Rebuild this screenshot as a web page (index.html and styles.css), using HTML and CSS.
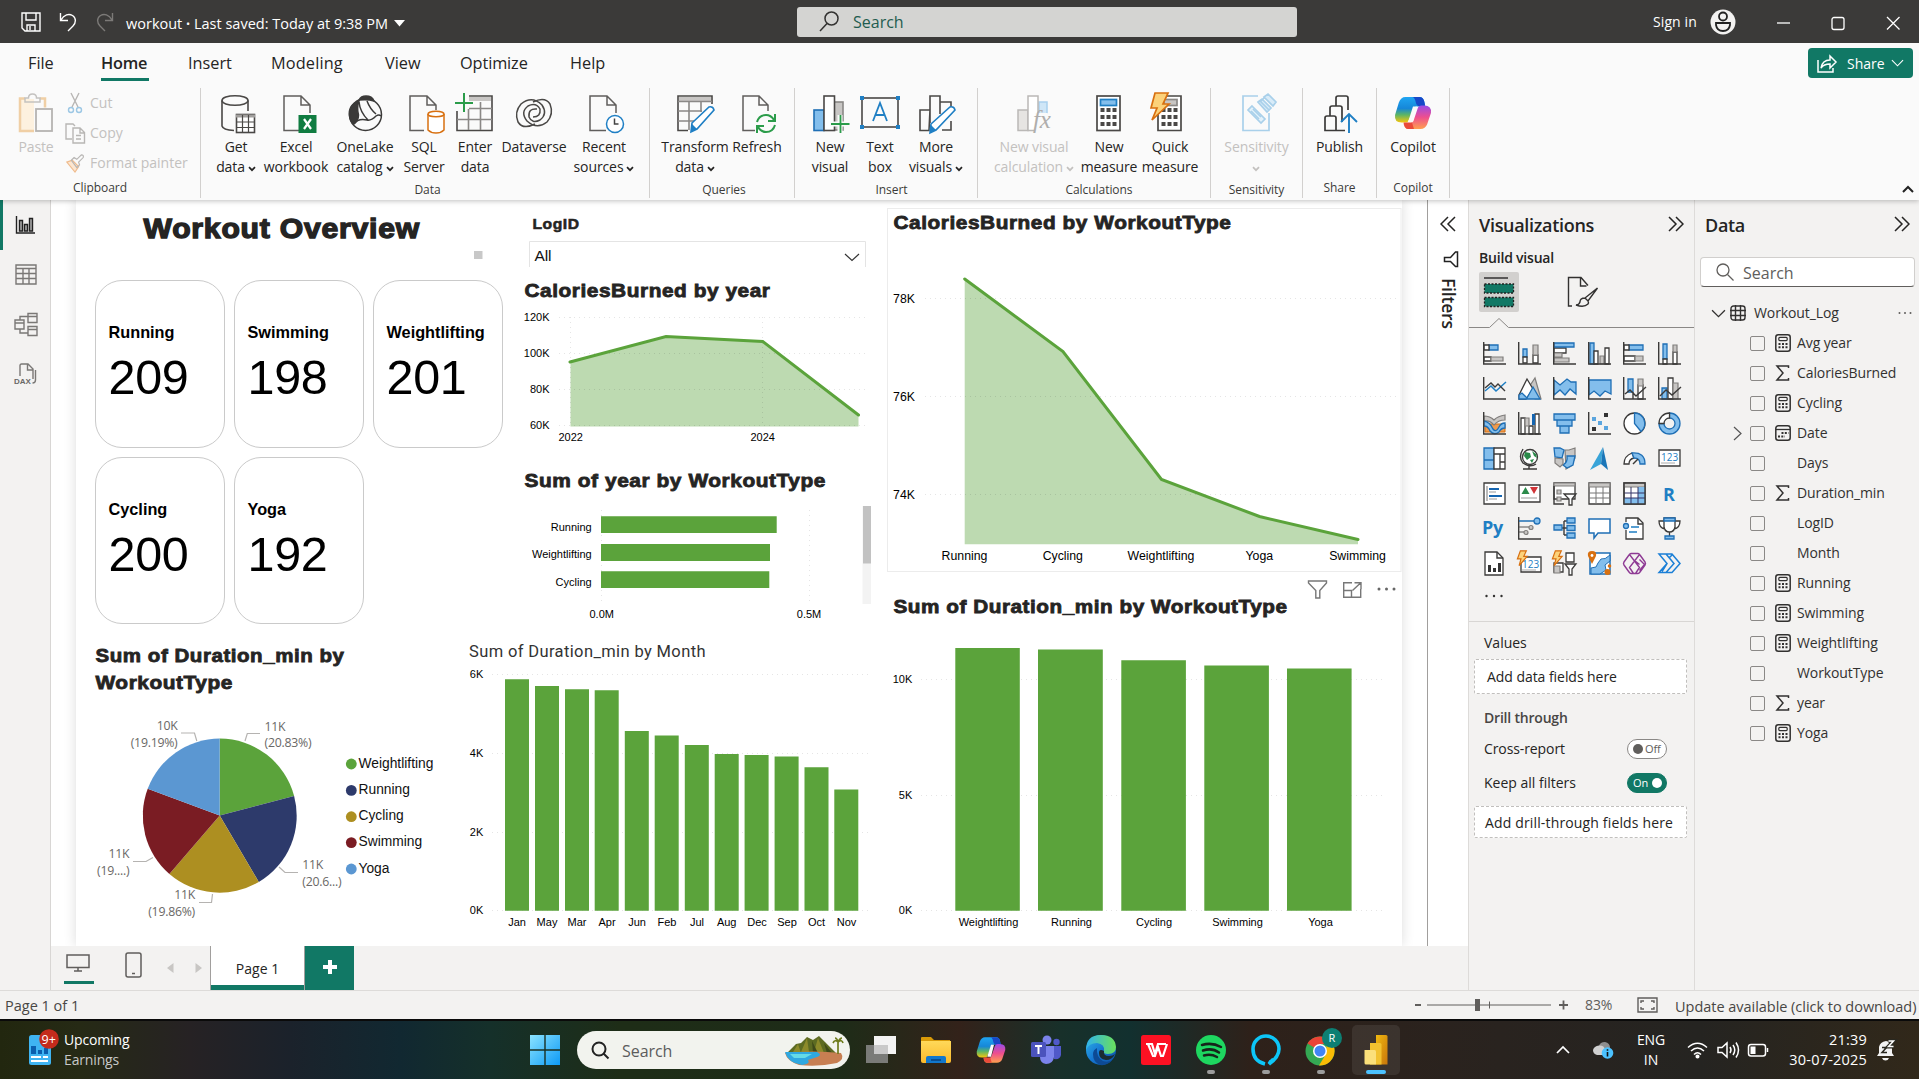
FILE: index.html
```html
<!DOCTYPE html>
<html lang="en">
<head>
<meta charset="utf-8">
<title>workout - Power BI Desktop</title>
<link rel="stylesheet" href="styles.css">
</head>
<body>
<svg class="defs" width="0" height="0" aria-hidden="true">
  <defs>
    <linearGradient id="cpA" x1="0" y1="0" x2="0" y2="1"><stop offset="0" stop-color="#1fa5f2"/><stop offset=".45" stop-color="#1687d8"/><stop offset=".7" stop-color="#5cb566"/><stop offset="1" stop-color="#f6c60c"/></linearGradient>
    <linearGradient id="cpB" x1="0" y1="0" x2="0" y2="1"><stop offset="0" stop-color="#9a4be8"/><stop offset=".5" stop-color="#ee4f8e"/><stop offset="1" stop-color="#ffa04f"/></linearGradient>
    <linearGradient id="edgeG" x1="0" y1="0" x2="1" y2="1"><stop offset="0" stop-color="#2fb6e8"/><stop offset=".5" stop-color="#1677d2"/><stop offset="1" stop-color="#0c4fa0"/></linearGradient>
    <linearGradient id="edgeT" x1="0" y1="0" x2="1" y2="0"><stop offset="0" stop-color="#2fb2ee"/><stop offset="1" stop-color="#6be05a"/></linearGradient>
    <linearGradient id="winG" x1="0" y1="0" x2="1" y2="1"><stop offset="0" stop-color="#8be3ff"/><stop offset="1" stop-color="#0d9af5"/></linearGradient>
    <linearGradient id="pbG" x1="0" y1="0" x2="1" y2="1"><stop offset="0" stop-color="#f0b90f"/><stop offset="1" stop-color="#c8760c"/></linearGradient>
    <linearGradient id="folderG" x1="0" y1="0" x2="0" y2="1"><stop offset="0" stop-color="#ffd95a"/><stop offset="1" stop-color="#fbb92b"/></linearGradient>
    <symbol id="down" viewBox="0 0 8 6"><path d="M1 1.2l3 3 3-3" fill="none" stroke="currentColor" stroke-width="1.7"/></symbol>
    <symbol id="chev" viewBox="0 0 14 8"><path d="M1 1l6 6 6-6" fill="none" stroke="currentColor" stroke-width="1.2"/></symbol>
    <symbol id="dbl" viewBox="0 0 16 16"><path d="M1 1l7 7-7 7M8 1l7 7-7 7" fill="none" stroke="currentColor" stroke-width="1.5"/></symbol>
    <symbol id="copilot" viewBox="0 0 40 36">
      <path d="M12 1h15q4 0 5 5l1 5H23L14 28q-1 0-6 0-8 0-7-8L5 7q2-6 7-6z" fill="url(#cpA)"/>
      <path d="M19 1h8q4 0 5 5l1 5h-6q-3 0-4-4-1-6-4-6z" fill="#1848c8"/>
      <path d="M28 35H15q-4 0-5-6h6q4 0 5-4l4-12q1-3 4-3h3q8 0 7 8l-4 12q-2 5-7 5z" fill="url(#cpB)"/>
      <path d="M10 28h9l2 7h-6q-4 0-5-7z" fill="#ea4a3a"/>
      <path d="M20 11h4l-4 16h-5z" class="cp-gap"/>
    </symbol>
    <symbol id="calc" viewBox="0 0 16 18"><rect x=".8" y=".8" width="14.4" height="16.4" rx="2.5" fill="none" stroke="#323130" stroke-width="1.5"/><rect x="3.8" y="3.4" width="8.4" height="3.2" rx="1" fill="none" stroke="#323130" stroke-width="1.2"/><path d="M3.5 10h9M3.5 13.2h9" stroke="#323130" stroke-width="2" stroke-dasharray="2 1.5"/></symbol>
    <symbol id="sigma" viewBox="0 0 16 18"><path d="M13.500 4V2H2l6 7-6 7h11.500v-2" fill="none" stroke="#323130" stroke-width="1.5"/></symbol>
    <symbol id="cal" viewBox="0 0 16 18"><rect x=".8" y="1.8" width="14.4" height="14.4" rx="2.5" fill="none" stroke="#323130" stroke-width="1.5"/><path d="M1 5.5h14" stroke="#323130" stroke-width="1.3"/><path d="M6.500 9h7M3 12.400h7" stroke="#323130" stroke-width="2" stroke-dasharray="2 1.3"/></symbol>
    <symbol id="bolt" viewBox="0 0 14 20"><path d="M4.500 1h7L8.500 7.500h4L3 18.500l2.200-8H1z" fill="#fcd27a" stroke="#d87010" stroke-width="1.4"/></symbol>
  </defs>
</svg>

<header class="titlebar">
  <svg class="ico-save" width="20" height="20" viewBox="0 0 20 20" fill="none" stroke="#fff" stroke-width="1.4"><path d="M1 1h18v18H4l-3-3zM5 1v7h10V1M6 19v-6h8v6M9 14v4"/></svg>
  <svg class="ico-undo" width="18" height="20" viewBox="0 0 18 20" fill="none" stroke="#fff" stroke-width="1.4"><path d="M1.500 1v7.500H9M2 8C5 2.500 10 1.500 13.500 3.500c4 2.500 3.500 7.500.5 10.500l-5 5"/></svg>
  <svg class="ico-redo" width="18" height="20" viewBox="0 0 18 20" fill="none" stroke="#7c7a78" stroke-width="1.4"><path d="M16.500 1v7.500H9M16 8C13 2.500 8 1.500 4.500 3.500c-4 2.500-3.500 7.500-.5 10.500l5 5"/></svg>
  <span class="doc">workout <small>•</small> Last saved: Today at 9:38 PM</span>
  <svg width="11" height="7" viewBox="0 0 11 7"><path d="M0 0h11L5.500 6.500z" fill="#fff"/></svg>
  <div class="top-search">
    <svg width="20" height="21" viewBox="0 0 20 21" fill="none" stroke="#323130" stroke-width="1.5"><circle cx="12.500" cy="7.500" r="6.500"/><path d="M8 12.500L1 20"/></svg>
    <span>Search</span>
  </div>
  <span class="signin">Sign in</span>
  <svg class="avatar" width="26" height="26" viewBox="0 0 26 26"><circle cx="13" cy="13" r="12.500" fill="#f3f2f1"/><circle cx="13" cy="7.500" r="4" fill="none" stroke="#222" stroke-width="1.8"/><path d="M6 14h14v2q-1 6-7 6t-7-6z" fill="none" stroke="#222" stroke-width="1.8"/></svg>
  <svg class="win" width="126" height="16" viewBox="0 0 126 16" fill="none" stroke="#fff" stroke-width="1.3"><path d="M1 8h13"/><rect x="56" y="2.500" width="12" height="12" rx="2"/><path d="M111 2l12.500 12.500M123.500 2L111 14.500"/></svg>
</header>

<nav class="tabs">
  <span class="tab t-file">File</span><span class="tab t-home active">Home</span><span class="tab t-insert">Insert</span><span class="tab t-model">Modeling</span><span class="tab t-view">View</span><span class="tab t-opt">Optimize</span><span class="tab t-help">Help</span>
  <button class="share"><svg width="20" height="19" viewBox="0 0 20 19" fill="none" stroke="#fff" stroke-width="1.500"><path d="M1 6v12h15v-4M4 14c1-6 4-8 9-8V2l6 6-6 6v-4c-4 0-7 1-9 4z"/></svg><span>Share</span><svg class="sh-chev" width="13" height="8"><use href="#chev"/></svg></button>
</nav>

<section class="ribbon">
  <div class="group g-clip">
    <div class="btns">
      <div class="btn w-paste off"><svg width="40" height="40" viewBox="0 0 40 40" fill="none"><path d="M9 6H4v31h14V6" fill="#fdf1df"/><path d="M9 5.500H4V38h14M24 5.500h5v9" stroke="#f0cfa5" stroke-width="2.500"/><path d="M9 9V5h3.500q0-4 4-4t4 4H24v4z" stroke="#c4c2c0" stroke-width="1.500"/><rect x="20" y="16" width="16" height="22" fill="#fafafa" stroke="#b5b3b1" stroke-width="1.800"/></svg><span>Paste</span></div>
      <div class="small off">
        <div class="s-row"><svg width="20" height="22" viewBox="0 0 20 22" fill="none" stroke-width="1.400"><path d="M6 1l7 14M14 1L7 15" stroke="#b8b6b4"/><circle cx="6" cy="18" r="2.500" stroke="#9cc7e4"/><circle cx="14" cy="18" r="2.500" stroke="#9cc7e4"/></svg><span>Cut</span></div>
        <div class="s-row"><svg width="20" height="22" viewBox="0 0 20 22" fill="none" stroke="#b8b6b4" stroke-width="1.400"><path d="M7 17H1V2h7l2 2"/><path d="M8 6h7l4.500 4.500V21H8zM15 6v5h4.500M11 13.500h5M11 17h5"/></svg><span>Copy</span></div>
        <div class="s-row"><svg width="22" height="22" viewBox="0 0 22 22" fill="none" stroke-width="1.300"><path d="M2 10l6-2 7 7-4 6z" fill="#fde6cf" stroke="#efbb8d"/><path d="M7 8l3-3 3 2 5-5q3 0 2 3l-5 5 1 3-3 3z" stroke="#b8b6b4"/></svg><span>Format painter</span></div>
      </div>
    </div>
    <div class="cap">Clipboard</div>
  </div>

  <div class="group g-data">
    <div class="btns">
      <div class="btn w60"><svg width="40" height="40" viewBox="0 0 40 40" fill="none" stroke="#4a4846" stroke-width="1.600"><ellipse cx="19" cy="7.500" rx="13" ry="4.800"/><path d="M6 7.500V33q1 4 12 4.500M32 7.500V18"/><rect x="20.500" y="21.500" width="18" height="18" fill="#fff"/><path d="M20 23h19" stroke="#a19f9d" stroke-width="3"/><path d="M20 29h19M20 34.500h19M26.500 22v17M32.500 22v17" stroke-width="1.200"/></svg><span>Get<br>data<svg class="dn" width="8" height="6"><use href="#down"/></svg></span></div>
      <div class="btn w60"><svg width="40" height="40" viewBox="0 0 40 40" fill="none" stroke="#605e5c" stroke-width="1.500"><path d="M23 37.500H8V3h17l9 9v8M25 3v9h9"/><rect x="22.500" y="22" width="18" height="18" fill="#107c41" stroke="none"/><path d="M28 26l7 10M35 26l-7 10" stroke="#fff" stroke-width="2.200"/></svg><span>Excel<br>workbook</span></div>
      <div class="btn w78"><svg width="40" height="40" viewBox="0 0 40 40" fill="none" stroke="#3b3a39" stroke-width="1.500"><circle cx="20.500" cy="21.500" r="16"/><path d="M14 8Q3 12 4.500 23q1 6 4 8 5-3 5-9-2-7 .5-14z" fill="#3b3a39"/><path d="M14 7q2-4 7-4 6 0 8 5-6-2-15-1z" fill="#3b3a39"/><path d="M14 9q1 10 9 18M22 8q3 8 9 13M9 31q4-6 13-4 4 1 9-4 3-2 5 0"/></svg><span>OneLake<br>catalog<svg class="dn" width="8" height="6"><use href="#down"/></svg></span></div>
      <div class="btn w40"><svg width="40" height="40" viewBox="0 0 40 40" fill="none" stroke="#605e5c" stroke-width="1.500"><path d="M20 37.500H6V3h17l9 9v5M23 3v9h9"/><g stroke="#d87010"><path d="M24 21v16q3 3 8 3t8-3V21" fill="#fff"/><ellipse cx="32" cy="21" rx="8" ry="2.800" fill="#fff"/></g></svg><span>SQL<br>Server</span></div>
      <div class="btn w62"><svg width="40" height="40" viewBox="0 0 40 40" fill="none" stroke="#4a4846" stroke-width="1.600"><path d="M14 3h23v34.500H2V18"/><path d="M14 6h22" stroke="#c8c6c4" stroke-width="4"/><path d="M14 15.500h23M2 26.500h35M13.500 16v21M25.500 9v28" stroke="#8a8886"/><path d="M0 10h18M9 0v19" stroke="#2b9c4a" stroke-width="2"/></svg><span>Enter<br>data</span></div>
      <div class="btn w56"><svg width="40" height="40" viewBox="0 0 40 40" fill="none" stroke="#4a4846" stroke-width="1.500"><path d="M21 31Q9 37 4 29 0 19 7 11q11-9 21 1 6 9-2 15-8 4-11-3-1-9 8-8"/><path d="M19 9Q31 3 36 11q4 10-3 18-10 8-20-1-7-9 1-15 8-4 12 3 1 8-7 8"/></svg><span>Dataverse</span></div>
      <div class="btn w84"><svg width="40" height="40" viewBox="0 0 40 40" fill="none" stroke="#605e5c" stroke-width="1.500"><path d="M22 37.500H6V3h17l9 9v8M23 3v9h9"/><circle cx="31" cy="31" r="8.500" fill="#fff" stroke="#1f7fc4"/><path d="M30.500 25.500V31h4" stroke="#444"/></svg><span>Recent<br>sources<svg class="dn" width="8" height="6"><use href="#down"/></svg></span></div>
    </div>
    <div class="cap">Data</div>
  </div>

  <div class="group g-query">
    <div class="btns">
      <div class="btn w82"><svg width="40" height="40" viewBox="0 0 40 40" fill="none" stroke="#4a4846" stroke-width="1.600"><path d="M13 37.500H3V3h34v8"/><path d="M4 6h32" stroke="#c8c6c4" stroke-width="4"/><path d="M3 8.500h34M3 18h24M3 28h16M14 9v28M26 9v10" stroke="#8a8886"/><path d="M17 30L34 14q4-1 5 3L22 36l-6 3z" fill="#fff" stroke="#1f7fc4"/><path d="M17 31l5 5-6 3z" fill="#1f7fc4" stroke="none"/></svg><span>Transform<br>data<svg class="dn" width="8" height="6"><use href="#down"/></svg></span></div>
      <div class="btn w42"><svg width="40" height="40" viewBox="0 0 40 40" fill="none" stroke="#605e5c" stroke-width="1.500"><path d="M18 37.500H6V3h16l9 9v6M22 3v9h9"/><g stroke="#2b9c4a" stroke-width="2"><path d="M20 29q2-7 9-7 5 0 8 5M38 21v7h-7M38 32q-2 7-9 7-5 0-8-5M20 40v-7h7"/></g></svg><span>Refresh</span></div>
    </div>
    <div class="cap">Queries</div>
  </div>

  <div class="group g-ins">
    <div class="btns">
      <div class="btn w48"><svg width="40" height="40" viewBox="0 0 40 40" fill="none" stroke="#4a4846" stroke-width="1.600"><rect x="24" y="9" width="9" height="28" fill="#c8c6c4" stroke="#8a8886"/><rect x="4" y="17" width="10" height="20.500" fill="#83beec" stroke="#1f6fb5"/><rect x="14" y="3" width="10.500" height="34.500" fill="#fff"/><path d="M30 22v18M20 31h19" stroke="#fafafa" stroke-width="5"/><path d="M30.500 22v18M21 31h18.500" stroke="#2b9c4a" stroke-width="1.800"/></svg><span>New<br>visual</span></div>
      <div class="btn w52"><svg width="40" height="40" viewBox="0 0 40 40" fill="none" stroke="#4a4846" stroke-width="1.600"><rect x="2" y="5" width="36" height="29"/><g fill="#1f7fc4" stroke="none"><path d="M0 3h4v4H0zM36 3h4v4h-4zM0 32h4v4H0zM36 32h4v4h-4z"/></g><path d="M13 28l7-18 7 18M15.500 22h9" stroke="#1f7fc4" stroke-width="1.800"/></svg><span>Text<br>box</span></div>
      <div class="btn w60"><svg width="40" height="40" viewBox="0 0 40 40" fill="none" stroke="#4a4846" stroke-width="1.600"><path d="M13 37.500H4V17h10zM14 30V3h10v18M24 9h11v5M35 28v9h-9"/><path d="M15 31L34 14q4-1 5 3L20 37l-6 3z" fill="#fff" stroke="#1f7fc4"/><path d="M15 32l5 5-6 3z" fill="#1f7fc4" stroke="none"/></svg><span>More<br>visuals<svg class="dn" width="8" height="6"><use href="#down"/></svg></span></div>
    </div>
    <div class="cap">Insert</div>
  </div>

  <div class="group g-calc">
    <div class="btns">
      <div class="btn w92 off"><svg width="40" height="40" viewBox="0 0 40 40" fill="none" stroke="#bab8b6" stroke-width="1.500"><rect x="25" y="9" width="8" height="16" fill="#cfe6f7" stroke="#a9d0ee"/><rect x="4" y="17" width="10" height="20.500" fill="#e6e4e2"/><rect x="14" y="3" width="10" height="34.500" fill="#fff"/><path d="M33 20h-12v20h18V22z" fill="#fafafa" stroke="none"/><text x="19" y="35" class="fx">fx</text></svg><span>New visual<br>calculation<svg class="dn" width="8" height="6"><use href="#down"/></svg></span></div>
      <div class="btn w58"><svg width="40" height="40" viewBox="0 0 40 40" fill="none" stroke="#4a4846" stroke-width="1.700"><rect x="8" y="3" width="23" height="34.500" fill="#fff"/><rect x="11.500" y="6.500" width="16" height="6" fill="#83beec" stroke="#1f7fc4"/><path d="M11.500 17h16M11.500 24h16M11.500 31h16" stroke-width="4" stroke-dasharray="4 2"/></svg><span>New<br>measure</span></div>
      <div class="btn w64"><svg width="40" height="40" viewBox="0 0 40 40" fill="none" stroke="#4a4846" stroke-width="1.700"><path d="M8 3h23v34.500H8z" fill="#fff"/><rect x="14" y="6.500" width="13" height="6" fill="#c8c6c4" stroke="#8a8886"/><path d="M11.500 17h16M11.500 24h16M11.500 31h16" stroke-width="4" stroke-dasharray="4 2"/><path d="M5 0h13l-5 11h6L2 27l5-12H1z" fill="#fcd27a" stroke="#d87010"/></svg><span>Quick<br>measure</span></div>
    </div>
    <div class="cap">Calculations</div>
  </div>

  <div class="group g-sens">
    <div class="btns"><div class="btn off"><svg width="40" height="40" viewBox="0 0 40 40" fill="none" stroke="#a9d0ea" stroke-width="1.700"><path d="M22 3H7v34.500h26V20"/><path d="M16 13l13 13-4 4-13-13z" fill="#e3f1fa"/><path d="M17 16l8 8M15 18l8 8"/><path d="M24 8l9 9M22 9l4-3 9 9-4 4zM28 4l4-3 8 8-3 4zM28 5l-3 3" fill="#d8ebf8"/></svg><span>Sensitivity<br><svg class="dn alone" width="8" height="6"><use href="#down"/></svg></span></div></div>
    <div class="cap">Sensitivity</div>
  </div>
  <div class="group g-share">
    <div class="btns"><div class="btn"><svg width="40" height="40" viewBox="0 0 40 40" fill="none" stroke="#3b3a39" stroke-width="1.700"><path d="M26 37.500H6V25q0-2 2-2h7q2 0 2 2v12M11 23V15q0-2 2-2h8q2 0 2 2v14M17 13V5q0-2 2-2h8q2 0 2 2v12"/><path d="M30 40V21M22 29l8-8 8 8" stroke="#1f7fc4" stroke-width="1.900"/></svg><span>Publish</span></div></div>
    <div class="cap">Share</div>
  </div>
  <div class="group g-cop">
    <div class="btns"><div class="btn"><svg class="cp" width="40" height="40" viewBox="0 0 40 40"><use href="#copilot" x="1" y="3" width="38" height="34"/></svg><span>Copilot</span></div></div>
    <div class="cap">Copilot</div>
  </div>
  <svg class="collapse" width="12" height="8" viewBox="0 0 12 8"><path d="M1 7l5-5 5 5" fill="none" stroke="#222" stroke-width="2"/></svg>
</section>

<main class="work">
  <aside class="rail">
    <div class="rail-item on"><svg width="20" height="20" viewBox="0 0 20 20" fill="none" stroke="#222" stroke-width="1.400"><path d="M1.500 1v17H20"/><path d="M4.500 5.500h3V16h-3zM9.500 9.500h3V16h-3zM14.500 3.500h3V16h-3z" fill="#aaa"/></svg></div>
    <div class="rail-item"><svg width="22" height="21" viewBox="0 0 22 21" fill="none" stroke="#7a7876" stroke-width="1.400"><path d="M1 1h20v19H1zM1 4.500h20M1 9.500h20M1 14.500h20M8 5v15M14 5v15"/></svg></div>
    <div class="rail-item"><svg width="24" height="25" viewBox="0 0 24 25" fill="none" stroke="#7a7876" stroke-width="1.400"><path d="M1 8h9v9H1zM1 11h9M14 1.500h9v9h-9zM14 4.500h9M14 14.500h9v9h-9zM14 17.500h9M6 8V4.500h8M6 17v4h8"/></svg></div>
    <div class="rail-item"><svg width="24" height="22" viewBox="0 0 24 22" fill="none" stroke="#7a7876" stroke-width="1.400"><path d="M6 13V2.500Q6 1 7.500 1H14l5 5v10M13.500 1v6H19M21.500 7v10q0 3-3 3"/><text x="0" y="21" class="dax">DAX</text></svg></div>
  </aside>

  <div class="center">
    <div class="stage">
      <div class="page">
        <div class="left-area">
          <div class="row-top">
            <div class="cards-col">
              <svg class="heading" width="434" height="78" viewBox="76 200 434 78"><text class="ttl big" x="143.500" y="237.500" textLength="276.500" lengthAdjust="spacingAndGlyphs">Workout Overview</text><path d="M474 251h8.500v8H474z" fill="#c8c8c8"/></svg>
              <div class="cards">
                <div class="card"><b>Running</b><span>209</span></div>
                <div class="card"><b>Swimming</b><span>198</span></div>
                <div class="card"><b>Weightlifting</b><span>201</span></div>
                <div class="card"><b>Cycling</b><span>200</span></div>
                <div class="card"><b>Yoga</b><span>192</span></div>
              </div>
            </div>
            <svg width="370" height="430" viewBox="510 200 370 430">
              <text class="ttl sm" x="532.500" y="229" textLength="47" lengthAdjust="spacingAndGlyphs">LogID</text>
              <path d="M529.500 267v-25.500h336V267" fill="none" stroke="#e4e4e4"/>
              <text class="ar" font-size="15.500" x="534.500" y="261" textLength="17">All</text>
              <path d="M845 254l7 6.500 7-6.500" fill="none" stroke="#333" stroke-width="1.200"/>
              <text class="ttl" x="524.500" y="296.500" textLength="246" lengthAdjust="spacingAndGlyphs">CaloriesBurned by year</text>
              <path d="M570.500 362L666 336.500l96.700 5L858.500 415v11.500h-288z" fill="#bddab1"/>
              <g class="grid"><path d="M559 317.500h307M559 353.500h307M559 389.500h307M559 425.500h307M570.500 317v109M762.500 317v109"/></g>
              <path d="M570 362L666 336.500l96.700 5L858.500 415" class="line"/>
              <g class="ax e"><text x="549.500" y="321">120K</text><text x="549.500" y="357">100K</text><text x="549.500" y="393">80K</text><text x="549.500" y="429">60K</text></g>
              <g class="ax m"><text x="570.700" y="441">2022</text><text x="762.700" y="441">2024</text></g>
              <text class="ttl" x="524.500" y="486.500" textLength="301.500" lengthAdjust="spacingAndGlyphs">Sum of year by WorkoutType</text>
              <g class="grid"><path d="M601.500 510v92M809.500 510v92"/></g>
              <g class="bar"><path d="M601 516.300h175.700V533H601zM601 544h169v17H601zM601 571.300h168.300V588H601z"/></g>
              <g class="ax e"><text x="591.700" y="530.800">Running</text><text x="591.700" y="558">Weightlifting</text><text x="591.700" y="586">Cycling</text></g>
              <g class="ax m"><text x="601.700" y="618.300">0.0M</text><text x="809" y="618.300">0.5M</text></g>
              <path d="M862.500 506h8.500v98h-8.500z" fill="#f3f3f3"/><path d="M863 506h8v57.500h-8z" fill="#c2c2c2"/>
            </svg>
          </div>
          <div class="row-bot">
            <svg width="384" height="315" viewBox="76 630 384 315">
              <text class="ttl" x="95.500" y="662" textLength="249" lengthAdjust="spacingAndGlyphs">Sum of Duration_min by</text>
              <text class="ttl" x="95.500" y="688.700" textLength="137.500" lengthAdjust="spacingAndGlyphs">WorkoutType</text>
              <path d="M219.700 815.600V738.600A77 77 0 0 1 294.100 795.900z" fill="#5ba33b"/>
              <path d="M219.700 815.600L294.100 795.900A77 77 0 0 1 258.800 882z" fill="#2d3a6b"/>
              <path d="M219.700 815.600L258.800 882A77 77 0 0 1 169.400 874z" fill="#ad8f21"/>
              <path d="M219.700 815.600L169.400 874A77 77 0 0 1 147.700 788.700z" fill="#7a1c23"/>
              <path d="M219.700 815.600L147.700 788.700A77 77 0 0 1 219.700 738.600z" fill="#5b97d2"/>
              <path class="lead" d="M181 733h13.500l2.300 8M245 741l2.300-7.500H260M133 861.500h13l7-4M279 867l6 5.500h13M212.500 894l-1 8.500H199"/>
              <g class="pl e"><text x="177.500" y="730">10K</text><text x="177.500" y="747">(19.19%)</text><text x="129.300" y="858">11K</text><text x="129.300" y="875">(19....)</text><text x="195" y="899">11K</text><text x="195" y="916">(19.86%)</text></g>
              <g class="pl"><text x="264.500" y="731">11K</text><text x="264.500" y="747.300">(20.83%)</text><text x="302.300" y="869">11K</text><text x="302.300" y="886">(20.6...)</text></g>
              <circle cx="351.300" cy="764" r="5.400" fill="#5ba33b"/><circle cx="351.300" cy="790.400" r="5.400" fill="#2d3a6b"/><circle cx="351.300" cy="816.700" r="5.400" fill="#ad8f21"/><circle cx="351.300" cy="842.600" r="5.400" fill="#7a1c23"/><circle cx="351.300" cy="869" r="5.400" fill="#5b97d2"/>
              <g class="ar" font-size="13.800"><text x="358.500" y="768">Weightlifting</text><text x="358.500" y="794">Running</text><text x="358.500" y="820">Cycling</text><text x="358.500" y="846.300">Swimming</text><text x="358.500" y="873.300">Yoga</text></g>
            </svg>
            <svg width="420" height="315" viewBox="460 630 420 315">
              <text class="din" x="469" y="657" textLength="236.500">Sum of Duration_min by Month</text>
              <g class="grid"><path d="M492 674.500h376M492 753.500h376M492 832.500h376M492 910.500h376"/></g>
              <g class="bar"><path d="M505 679.300h24V910.700h-24zM535 686h24V910.700h-24zM565 689.300h24V910.700h-24zM594.700 690.300h24V910.700h-24zM624.800 731h24V910.700h-24zM654.700 735.600h24V910.700h-24zM684.800 745h24V910.700h-24zM714.700 754h24V910.700h-24zM744.600 755h24V910.700h-24zM774.600 756.600h24V910.700h-24zM804.500 767.300h24V910.700h-24zM834.300 789.500h24V910.700h-24z"/></g>
              <g class="ax e"><text x="483.300" y="678">6K</text><text x="483.300" y="757">4K</text><text x="483.300" y="836">2K</text><text x="483.300" y="914">0K</text></g>
              <g class="ax m"><text x="517" y="926">Jan</text><text x="547" y="926">May</text><text x="577" y="926">Mar</text><text x="607" y="926">Apr</text><text x="637" y="926">Jun</text><text x="667" y="926">Feb</text><text x="697" y="926">Jul</text><text x="726.700" y="926">Aug</text><text x="757" y="926">Dec</text><text x="787" y="926">Sep</text><text x="816.500" y="926">Oct</text><text x="846.500" y="926">Nov</text></g>
            </svg>
          </div>
        </div>
        <svg width="522" height="745" viewBox="880 200 522 745">
          <rect x="887.500" y="208.500" width="513.500" height="363" fill="none" stroke="#ececec"/>
          <text class="ttl" x="893.500" y="228.700" textLength="338" lengthAdjust="spacingAndGlyphs">CaloriesBurned by WorkoutType</text>
          <path d="M964.700 279L1063 351.500l98.500 128 98 37 98.500 23v4.800H964.700z" fill="#bddab1"/>
          <g class="grid"><path d="M925 298.500h473M925 396.500h473M925 494.500h473"/></g>
          <path d="M964.700 279L1063 351.500l98.500 128 98 37 98.500 23" class="line"/>
          <g class="ax2 e"><text x="915" y="303">78K</text><text x="915" y="401">76K</text><text x="915" y="499">74K</text></g>
          <g class="ax2 m"><text x="964.500" y="560">Running</text><text x="1062.800" y="560">Cycling</text><text x="1161" y="560">Weightlifting</text><text x="1259.300" y="560">Yoga</text><text x="1357.500" y="560">Swimming</text></g>
          <g fill="none" stroke="#777" stroke-width="1.400"><path d="M1308.500 581h18v2l-6.700 7.500V598h-4v-7.500l-7.300-7.500zM1352 582.700h-8.300v14.600h17V589M1344 590.500h7.500v7M1354.500 582.700h6.500v6.500M1360.500 583l-8 7.500"/></g>
          <g fill="#666"><circle cx="1379" cy="589" r="1.500"/><circle cx="1386.500" cy="589" r="1.500"/><circle cx="1394" cy="589" r="1.500"/></g>
          <text class="ttl" x="893.500" y="612.500" textLength="394" lengthAdjust="spacingAndGlyphs">Sum of Duration_min by WorkoutType</text>
          <g class="grid"><path d="M921 679.500h465M921 795.500h465M921 910.500h465"/></g>
          <g class="bar"><path d="M955.300 648h64.500V910.700h-64.500zM1038 649.600h64.800V910.700H1038zM1121.300 660.300h64.600V910.700h-64.600zM1204.300 665.500h64.600V910.700h-64.600zM1287 668.500h64.600V910.700H1287z"/></g>
          <g class="ax e"><text x="912.300" y="683">10K</text><text x="912.300" y="799">5K</text><text x="912.300" y="914">0K</text></g>
          <g class="ax m"><text x="988.500" y="926">Weightlifting</text><text x="1071.500" y="926">Running</text><text x="1154" y="926">Cycling</text><text x="1237.500" y="926">Swimming</text><text x="1320.500" y="926">Yoga</text></g>
        </svg>
      </div>
      <aside class="filters">
        <svg class="flip" width="16" height="16"><use href="#dbl"/></svg>
        <svg class="fl-ico" width="16" height="17" viewBox="0 0 16 17" fill="none" stroke="#222" stroke-width="1.500"><path d="M14.500 1v14.500h-2L7.500 10.500H1.500v-4h6L12.500 1z"/></svg>
        <span>Filters</span>
      </aside>
    </div>
    <div class="pagetabs">
      <div class="view-d"><svg width="24" height="18" viewBox="0 0 24 18" fill="none" stroke="#605e5c" stroke-width="1.500"><path d="M1 1h22v12.500H1zM12 13.500V17M8 17h8"/></svg></div>
      <svg class="view-m" width="17" height="26" viewBox="0 0 17 26" fill="none" stroke="#605e5c" stroke-width="1.500"><rect x="1" y="1" width="15" height="24" rx="2"/><path d="M7 21.500h3"/></svg>
      <svg class="tri" width="36" height="12" viewBox="0 0 36 12" fill="#c8c6c4"><path d="M6.500 1v10L0 6zM28.500 1v10l6.500-5z"/></svg>
      <div class="ptab">Page 1</div>
      <div class="padd"><svg width="14" height="14" viewBox="0 0 14 14"><path d="M7 0v14M0 7h14" stroke="#fff" stroke-width="4"/></svg></div>
    </div>
  </div>

  <aside class="viz">
    <div class="p-head"><h2>Visualizations</h2><svg width="16" height="16"><use href="#dbl"/></svg></div>
    <div class="sub">Build visual</div>
    <div class="modes">
      <div class="mode on"><svg width="32" height="32" viewBox="0 0 32 32"><path d="M1 2h24" stroke="#323130" stroke-width="1.500"/><rect x="1.500" y="8" width="29" height="9" fill="#117865" stroke="#222" stroke-dasharray="2 1.500" stroke-width="1.300"/><rect x="1.500" y="21.500" width="29" height="9" fill="#117865" stroke="#222" stroke-dasharray="2 1.500" stroke-width="1.300"/></svg></div>
      <div class="mode"><svg width="32" height="32" viewBox="0 0 32 32" fill="none" stroke="#323130" stroke-width="1.400"><path d="M5 30H1.500V1.500H14l7 8M13.500 1.500V10h6M30.500 12L18 22l3 3zM18 22q-5 0-5 4-1 3-4 3 8 3 12-1 1-1 0-3"/></svg></div>
    </div>
    <svg class="notch" width="226" height="12" viewBox="0 0 226 12"><path d="M0 10.500h20.500l9.500-9 9.500 9H226" fill="none" stroke="#8a8886"/></svg>
    <div class="vgrid">
      <svg viewBox="0 0 23 23"><path class="bl" d="M6 3h9v5H6z"/><path class="wh" d="M1 3h5v5H1zM1 15h7v4H1z"/><path class="gy" d="M8 15h12v4H8z"/><path class="dk" d="M.7 0v22H23"/></svg>
      <svg viewBox="0 0 23 23"><path class="bl" d="M5 7h4v8H5z"/><path class="wh" d="M5 15h4v6H5zM15 13h5v8h-5z"/><path class="gy" d="M15 3h5v10h-5z"/><path class="dk" d="M.7 0v22H23"/></svg>
      <svg viewBox="0 0 23 23"><path class="wh" d="M1 6h12v5H1z"/><path class="gy" d="M1 11h8v4H1zM1 16h15v4H1z"/><path class="bl" d="M1 1h20v4H1z"/><path class="dk" d="M.7 0v22H23"/></svg>
      <svg viewBox="0 0 23 23"><path class="bl" d="M2 1h4v21H2z"/><path class="wh" d="M6 9h4v13H6z"/><path class="gy" d="M12 14h4v8h-4z"/><path class="wh" d="M17 6h4v16h-4z"/><path class="dk" d="M.7 0v22H23"/></svg>
      <svg viewBox="0 0 23 23"><path class="bl" d="M6 3h14v5H6z"/><path class="wh" d="M1 3h5v5H1zM1 14h11v5H1z"/><path class="gy" d="M12 14h8v5h-8z"/><path class="dk" d="M.7 0v22H23"/></svg>
      <svg viewBox="0 0 23 23"><path class="bl" d="M5 2h4v15H5z"/><path class="wh" d="M5 17h4v5H5zM15 10h4v12h-4z"/><path class="gy" d="M15 3h4v7h-4z"/><path class="dk" d="M.7 0v22H23"/></svg>

      <svg viewBox="0 0 23 23"><path class="dk" d="M.7 0v22H23"/><path d="M2 14l6-5 5 5L23 5" fill="none" stroke="#1f7fc4" stroke-width="1.500"/><path class="dk" d="M2 11l6-5 4 4 3-3 7 7"/></svg>
      <svg viewBox="0 0 23 23"><path class="gy" d="M11 10l6-9 6 21h-6z"/><path class="wh" d="M1 18L9 2l6 10-7 10H1z"/><path class="bl" d="M1 18l3-2 5 5 6-11 7 12H1z"/></svg>
      <svg viewBox="0 0 23 23"><path class="bl" d="M1 3l6 5 7-6 4 3h5v12l-6-5-5 6-5-5-6 5z"/><path class="dk" d="M.7 0v22H23"/></svg>
      <svg viewBox="0 0 23 23"><path class="bl" d="M1 3h22v14l-6-3-5 5-6-5-5 4z"/><path class="dk" d="M.7 0v22H23"/></svg>
      <svg viewBox="0 0 23 23"><path class="bl" d="M5 2h5v13H5z"/><path class="wh" d="M15 8h5v14h-5z"/><path class="gy" d="M15 2h5v7h-5z"/><path class="dk" d="M.7 0v22H23M2 17l5-4 6 6 10-9M10 15v7"/></svg>
      <svg viewBox="0 0 23 23"><path class="bl" d="M4 11h5v11H4z"/><path class="wh" d="M10 1h5v21h-5z"/><path class="gy" d="M15 6h5v16h-5z"/><path class="dk" d="M.7 0v22H23M2 19l6-6 6 5 9-8"/></svg>

      <svg viewBox="0 0 23 23"><path d="M2 12h20v8H2z" fill="#ee9a4e" stroke="#d87010"/><path class="gy" d="M1 4q6 0 10 4 4-4 11-5v5q-7 0-11 5Q7 8 1 9z"/><path class="bl" d="M1 9q6 1 9 8 3 4 6-2 2-4 6-4v5q-4 0-6 4-5 4-9-1-2-5-6-5z"/><path class="dk" d="M.7 0v22H23"/></svg>
      <svg viewBox="0 0 23 23"><path class="wh" d="M3 6h4v16H3zM11 14h4v8h-4zM17 2h4v20h-4z"/><path class="gy" d="M7 6h4v8H7z"/><path d="M14 2h3v11h-3z" fill="#1565b0"/><path class="dk" d="M.7 0v22H23"/></svg>
      <svg viewBox="0 0 23 23"><path class="bl" d="M1 2h21v6H1zM4 8h15v6H4zM7 14h9v7H7z"/></svg>
      <svg viewBox="0 0 23 23"><path d="M4 5h4v4H4zM10 9h4v4h-4zM16 14h4v4h-4z" fill="#5aa5de"/><path d="M16 1h4v4h-4zM4 15h4v4H4z" fill="#333"/><path class="dk" d="M.7 0v22H23"/></svg>
      <svg viewBox="0 0 23 23"><circle cx="11.500" cy="11.500" r="10.500" class="wh"/><path class="bl" d="M11.500 1a10.500 10.500 0 0 1 6.500 18.500l-6.500-8z"/></svg>
      <svg viewBox="0 0 23 23"><path class="bl" fill-rule="evenodd" d="M11.500 1a10.500 10.500 0 1 1-10.500 10.500h5a5.500 5.500 0 1 0 5.500-5.500z"/><path class="wh" d="M1 11.500A10.500 10.500 0 0 1 11.500 1v5A5.500 5.500 0 0 0 6 11.500z"/></svg>

      <svg viewBox="0 0 23 23"><path class="bl" d="M1 1h10v12H1zM1 13h10v9H1z"/><path class="wh" d="M11 1h11v6H11zM11 7h6v15h-6zM17 7h5v8h-5zM17 15h5v7h-5z"/></svg>
      <svg viewBox="0 0 23 23"><circle cx="12" cy="10" r="7.500" class="wh"/><path d="M7 5l5 1 1 4-4 3-3-4zM14 4l4 3 1 4-3-2zM12 13l4-1-2 4z" fill="#2b8a4a"/><path class="dk" d="M5 2q-5 8 0 14 7 5 13 1M11 18v4M5 22h14"/></svg>
      <svg viewBox="0 0 23 23"><path class="gy" d="M12 3h4l6-2v10l-4 8-5 3z"/><path class="bl" d="M1 1h6l4 2-2 8-7-1zM14 9h8l-2 9-6 3-4-3q5-3 4-9z"/><path class="gy" d="M2 11l8 1v5l-3 3-5-4z"/></svg>
      <svg viewBox="0 0 23 23"><path d="M15 0L2 23l11-6z" fill="#38a4d8"/><path d="M15 0l5 23-7-6z" fill="#1a76b8"/></svg>
      <svg viewBox="0 0 23 23"><path class="wh" d="M1 17Q1 9 9 6l2 5q-5 1-5 6z"/><path class="bl" d="M9 6q13-1 13 11h-5q0-6-6-6z"/><path class="dk" d="M10 17l5-5"/></svg>
      <svg viewBox="0 0 23 23"><path class="wh" d="M1 3h21v16H1z"/><text x="3" y="14" class="n123">123</text><path d="M3 16h14" stroke="#aaa"/></svg>

      <svg viewBox="0 0 23 23"><path class="wh" d="M1 1h21v21H1z"/><path d="M4 4v15" stroke="#777"/><path d="M6 7h10M6 14h13" stroke="#1565b0" stroke-width="2"/><path d="M6 10h7M6 17h8" stroke="#999"/></svg>
      <svg viewBox="0 0 23 23"><path class="wh" d="M1 3h21v17H1z"/><path d="M3.500 12L7.500 5l4 7z" fill="#2b8a4a"/><path d="M12 5h8l-4 7z" fill="#d13438"/><path d="M3 16h16" stroke="#999"/></svg>
      <svg viewBox="0 0 23 23"><path class="wh" d="M1 1h21v16H1z"/><path class="gy" d="M1 1h21v3H1zM4 8h4v4H4zM4 15h4v4H4z"/><path class="dk" d="M1 4v18h10"/><path class="wh" d="M11 12h12l-4 5v6h-3v-6z"/></svg>
      <svg viewBox="0 0 23 23"><path class="wh" d="M1 1h21v21H1z"/><path class="gy" d="M1 1h21v4H1z"/><path d="M1 11h21M1 16h21M8 5v17M15 5v17" stroke="#777" fill="none"/></svg>
      <svg viewBox="0 0 23 23"><path class="wh" d="M1 1h21v21H1z"/><path class="gy" d="M1 1h21v4H1z"/><path d="M15 5h7v17H1v-6h14z" fill="#83beec"/><path d="M1 11h21M1 16h21M8 5v17M15 5v17" stroke="#336" fill="none"/><path class="dk" d="M1 1h21v21H1z"/></svg>
      <svg viewBox="0 0 23 23"><text x="5" y="18.500" class="rt">R</text></svg>

      <svg viewBox="0 0 23 23"><text x="-1" y="17" class="rt">Py</text></svg>
      <svg viewBox="0 0 23 23"><path class="dk" d="M.7 0v22H23"/><path d="M1 4h15" stroke="#1f6fb5" stroke-width="1.500"/><circle cx="19" cy="4" r="3" class="bl"/><path d="M1 10h10M1 15h5" stroke="#555"/><circle cx="13" cy="10.500" r="2" class="gy"/><circle cx="8" cy="15.500" r="2" class="gy"/></svg>
      <svg viewBox="0 0 23 23"><path class="dk" d="M8 11h7M11 4v14M11 4h4M11 18h4"/><path class="bl" d="M1 8h8v5H1zM14 1h8v5h-8zM14 8.500h8v5h-8zM14 16h8v5h-8z"/></svg>
      <svg viewBox="0 0 23 23"><path d="M1 2h21v14H10l-4 5v-5H1z" fill="#fff" stroke="#1f6fb5" stroke-width="1.500"/></svg>
      <svg viewBox="0 0 23 23"><path class="wh" d="M3 5V1h12l5 5v16H3v-9"/><path class="dk" d="M15 1v6h5"/><circle cx="3" cy="9" r="2.500" class="bl"/><path d="M8 10h8M6 15h8" stroke="#1f7fc4" stroke-width="1.500"/></svg>
      <svg viewBox="0 0 23 23"><path class="wh" d="M6 1h11v9q-1 5-5.500 5T6 10zM6 4H1q0 7 6 8M17 4h5q0 7-6 8M11.500 15v5"/><path class="bl" d="M6 1h11v3H6zM7 19h9v3H7z"/></svg>

      <svg viewBox="0 0 23 23"><path class="wh" d="M2 0h12l6 6v17H2z"/><path class="dk" d="M14 0v6h6"/><path d="M5 13h3v7H5zM10 16h3v4h-3zM15 11h3v9h-3z" fill="#333"/></svg>
      <svg viewBox="0 0 23 23"><path class="wh" d="M3 5h20v15H3z"/><text x="4" y="16" class="n123">123</text><path d="M4 18h14" stroke="#aaa"/><use href="#bolt" x="-2" y="-2" width="13" height="17"/></svg>
      <svg viewBox="0 0 23 23"><path class="wh" d="M1 11h9v9H1zM13 1h8v9h-8z"/><path class="gy" d="M1 14h6v7H1z"/><path class="wh" d="M12 12h11l-4 5v6h-3v-6z"/><use href="#bolt" x="-2" y="-2" width="13" height="17"/></svg>
      <svg viewBox="0 0 23 23"><path d="M2 1h20v21H2z" fill="#fff" stroke="#1f6fb5" stroke-width="1.500"/><path d="M13 7q4 1 9-4v6l-5 4 1 5-6 4H3v-6l5-1 2-4z" fill="#83beec" stroke="#1f6fb5"/><path d="M4-1q5 0 4 5l-4 8-4-8q-1-5 4-5z" fill="#d87010"/><circle cx="4" cy="3.500" r="1.400" fill="#fff"/><circle cx="19.500" cy="20" r="3" fill="#d87010"/><circle cx="21.500" cy="14" r="1.800" fill="#d87010"/></svg>
      <svg viewBox="0 0 23 23" fill="none" stroke="#8e3a94" stroke-width="1.400"><path d="M8 1.500h7q1 0 2 1.500l5 7q1 1.500 0 3l-5 7q-1 1.500-2 1.500H8q-1 0-2-1.500l-5-7q-1-1.500 0-3l5-7q1-1.500 2-1.500zM6.500 2.500l10 13-4 6M16.500 2.500l-10 13 4 6M16.500 7.500l5 5-5 6M11.500 8.500l5 4"/></svg>
      <svg viewBox="0 0 23 23" fill="none" stroke="#1b7fd6" stroke-width="1.500"><path d="M1 2h13l8 9.500-8 9H1l8-9zM8 2l8 9.500-8 9M9 11.500l-5 8M14 3l-3 3"/></svg>
    </div>
    <div class="more"><svg width="20" height="4" viewBox="0 0 20 4" fill="#323130"><circle cx="2.500" cy="2" r="1.200"/><circle cx="10" cy="2" r="1.200"/><circle cx="17.500" cy="2" r="1.200"/></svg></div>
    <div class="wells">
      <div class="w-t">Values</div>
      <div class="drop">Add data fields here</div>
      <div class="w-t dt">Drill through</div>
      <div class="tog-row"><span>Cross-report</span><div class="tog"><i></i>Off</div></div>
      <div class="tog-row two"><span>Keep all filters</span><div class="tog on">On<i></i></div></div>
      <div class="drop d2">Add drill-through fields here</div>
    </div>
  </aside>

  <aside class="data">
    <div class="p-head"><h2>Data</h2><svg width="16" height="16"><use href="#dbl"/></svg></div>
    <div class="d-search"><svg width="18" height="18" viewBox="0 0 18 18" fill="none" stroke="#605e5c" stroke-width="1.300"><circle cx="7" cy="7" r="6"/><path d="M11.500 11.500l6 6"/></svg><span>Search</span></div>
    <div class="t-row"><svg class="c-open" width="15" height="9"><use href="#chev"/></svg><svg class="tb" width="16" height="16" viewBox="0 0 16 16" fill="none" stroke="#323130" stroke-width="1.400"><rect x="1" y="1" width="14" height="14" rx="2.500"/><path d="M5.500 0v16M10.500 0v16M0 5.500h16M0 10.500h16"/></svg><span class="t-name">Workout_Log</span><svg class="t-more" width="14" height="4" viewBox="0 0 14 4" fill="#605e5c"><circle cx="1.500" cy="2" r="1"/><circle cx="7" cy="2" r="1"/><circle cx="12.500" cy="2" r="1"/></svg></div>
    <div class="f-row"><i></i><svg><use href="#calc"/></svg><span>Avg year</span></div>
    <div class="f-row"><i></i><svg><use href="#sigma"/></svg><span>CaloriesBurned</span></div>
    <div class="f-row"><i></i><svg><use href="#calc"/></svg><span>Cycling</span></div>
    <div class="f-row exp"><svg class="c-side" width="9" height="15" viewBox="0 0 9 15"><path d="M1 1l7 6.500L1 14" fill="none" stroke="#555" stroke-width="1.200"/></svg><i></i><svg><use href="#cal"/></svg><span>Date</span></div>
    <div class="f-row"><i></i><svg></svg><span>Days</span></div>
    <div class="f-row"><i></i><svg><use href="#sigma"/></svg><span>Duration_min</span></div>
    <div class="f-row"><i></i><svg></svg><span>LogID</span></div>
    <div class="f-row"><i></i><svg></svg><span>Month</span></div>
    <div class="f-row"><i></i><svg><use href="#calc"/></svg><span>Running</span></div>
    <div class="f-row"><i></i><svg><use href="#calc"/></svg><span>Swimming</span></div>
    <div class="f-row"><i></i><svg><use href="#calc"/></svg><span>Weightlifting</span></div>
    <div class="f-row"><i></i><svg></svg><span>WorkoutType</span></div>
    <div class="f-row"><i></i><svg><use href="#sigma"/></svg><span>year</span></div>
    <div class="f-row"><i></i><svg><use href="#calc"/></svg><span>Yoga</span></div>
  </aside>
</main>

<footer class="status">
  <span class="pg">Page 1 of 1</span>
  <svg class="zoom" width="156" height="16" viewBox="0 0 156 16" fill="none" stroke="#605e5c"><path d="M1 8h6M145 8h9M149.500 3.500v9" stroke-width="1.800"/><path d="M13 8h124M75.500 4.500v7"/><path d="M61 2h5v12h-5z" fill="#605e5c" stroke="none"/></svg>
  <span class="pct">83%</span>
  <svg class="fit" width="21" height="16" viewBox="0 0 21 16" fill="none" stroke="#605e5c" stroke-width="1.400"><path d="M1 1h19v14H1zM4 6V4h3M14 4h3v2M17 10v2h-3M7 12H4v-2"/></svg>
  <span class="upd">Update available (click to download)</span>
</footer>

<footer class="taskbar">
  <svg class="news" width="32" height="38" viewBox="0 0 32 38"><rect x="1" y="6" width="22" height="30" rx="2.500" fill="#3fb4f2"/><path d="M3 17h5v8H3zM10 21h4v4h-4zM16 19h4v6h-4z" fill="#0b5fae"/><path d="M3 28h10M15 28h5M3 32h17" stroke="#fff" stroke-width="1.800"/><circle cx="21" cy="10" r="9.800" fill="#c42b1c"/><text x="13.500" y="14.500" class="bdg">9+</text></svg>
  <div class="news-t"><span>Upcoming</span><span class="dim">Earnings</span></div>
  <svg class="start" width="30" height="30" viewBox="0 0 30 30" fill="url(#winG)"><path d="M0 0h14.300v14.300H0zM15.700 0H30v14.300H15.700zM0 15.700h14.300V30H0zM15.700 15.700H30V30H15.700z"/></svg>
  <div class="t-search">
    <svg width="19" height="19" viewBox="0 0 19 19" fill="none" stroke="#222" stroke-width="2"><circle cx="8" cy="8" r="6.500"/><path d="M12.500 12.500l5 5"/></svg>
    <span>Search</span>
    <svg class="isle" width="60" height="32" viewBox="0 0 60 32"><path d="M3 19L12 10l5-1 6-6 6 3 6-4 6 6 9 9 3 3z" fill="#5d6b22"/><path d="M14 10l-5 8 8 1zM23 4l-6 14h8zM34 4l-4 14 10 1z" fill="#8c8a2a"/><path d="M28 7l1 12h5zM40 9l3 10 5 0z" fill="#3f4a1a"/><path d="M1 19q28-3 56 0 4 6-4 10-18 4-38 2Q3 27 1 19z" fill="#c77f52"/><path d="M1 18h32q6 3 0 5l-9 3q3 4-6 5Q4 29 1 18z" fill="#2fa8e0"/><path d="M6 20h22l-7 4H10z" fill="#65dbe6"/><path d="M54 20V8M54 8q-3-3-5 1M54 8q4-3 5 1M54 8q-1-4-3-4M54 8q2-4 4-4" stroke="#6e7b1d" stroke-width="1.700" fill="none"/></svg>
  </div>
  <div class="apps">
    <div class="app"><svg viewBox="0 0 32 32"><path d="M9 2h22v18H9z" fill="#f3f3f3"/><path d="M1 11h22v18H1z" fill="#8a8a8a" fill-opacity=".85"/><path d="M9 11h14v9H9z" fill="#c9c9c9"/></svg></div>
    <div class="app"><svg viewBox="0 0 32 32"><path d="M1 4q0-1 1-1h9l3 3h16v5H1z" fill="#d99a08"/><path d="M1 7h30v20q0 2-2 2H3q-2 0-2-2z" fill="url(#folderG)"/><path d="M6 29v-5q0-2 2-2h16q2 0 2 2v5z" fill="#1277cc"/><path d="M11 26h10" stroke="#0a4e92" stroke-width="2"/></svg></div>
    <div class="app cpd"><svg viewBox="0 0 32 32"><use href="#copilot" x="1" y="2.500" width="30" height="27"/></svg></div>
    <div class="app"><svg viewBox="0 0 32 32"><circle cx="17" cy="6" r="4.500" fill="#7b83eb"/><circle cx="26.500" cy="8" r="3.200" fill="#5059c9"/><path d="M22 12h9v9q-1 5-7 4z" fill="#5059c9"/><path d="M10 12h14v11q-1 7-8 7-6-1-6-7z" fill="#7b83eb"/><rect x="1" y="8" width="15" height="15" rx="1.500" fill="#4b53bc"/><path d="M5 12h7M8.500 12v8" stroke="#fff" stroke-width="2"/></svg></div>
    <div class="app"><svg viewBox="0 0 32 32"><circle cx="16" cy="16" r="15" fill="url(#edgeG)"/><path d="M1 16Q1 1 16 1q14 0 15 12 0 7-8 7-5 0-4-3 1-7-7-8Q4 9 1 16z" fill="url(#edgeT)"/><path d="M12 14q-1 9 6 13 6 2 10-2-5 7-13 6Q8 28 8 20q0-4 4-6z" fill="#0d4a94"/><path d="M19 17q-1 5 5 5 4 0 6-2-3 6-9 6-7-1-7-7 0-5 5-2z" fill="#1b2c31"/></svg></div>
    <div class="app"><svg viewBox="0 0 32 32"><rect x="1" y="1" width="30" height="30" rx="2.500" fill="#fc1123"/><path d="M6 10h6l3 10 3-10h8M8 10l5 12h2l3-9 3 9h2l4-12" fill="none" stroke="#fff" stroke-width="2.200"/></svg></div>
    <div class="app dot"><svg viewBox="0 0 32 32"><circle cx="16" cy="16" r="15" fill="#1ed760"/><path d="M7 11q10-3 19 2M8 16.500q9-3 16 2M9 21.500q7-2 13 1.500" fill="none" stroke="#16241a" stroke-width="2.500" stroke-linecap="round"/></svg></div>
    <div class="app dot"><svg viewBox="0 0 32 32"><path d="M15 30Q3 27 3 15A13 13 0 0 1 29 15q0 8-10 15 3-4 2-5" fill="none" stroke="#0dc6f8" stroke-width="3.600"/></svg></div>
    <div class="app dot"><svg viewBox="0 0 32 32"><circle cx="15" cy="17" r="14.500" fill="#34a853"/><path d="M15 17L2.500 9.500A14.500 14.500 0 0 1 27.600 9.800L15 10z" fill="#ea4335"/><path d="M27.700 10A14.500 14.500 0 0 1 14 31.500L21 20l.5-10z" fill="#fbbc05"/><circle cx="15" cy="17" r="7" fill="#fff"/><circle cx="15" cy="17" r="5.500" fill="#4285f4"/></svg><b>R</b></div>
    <div class="app sel"><svg viewBox="0 0 32 32"><path d="M16 1h10q1.500 0 1.500 1.500v28H16z" fill="url(#pbG)"/><path d="M10 9h10q1.500 0 1.500 1.500v20H10z" fill="#f2c230"/><path d="M4.500 16h10q1.500 0 1.500 1.500v13H6q-1.500 0-1.500-1.500z" fill="#fbe07a"/></svg></div>
  </div>
  <svg class="up" width="14" height="8" viewBox="0 0 14 8"><path d="M1 7l6-6 6 6" fill="none" stroke="#fff" stroke-width="1.700"/></svg>
  <svg class="od" width="22" height="18" viewBox="0 0 22 18"><path d="M6 5q1-4 6-4 5 1 5 6v6H8z" fill="#8e8e8e"/><path d="M6 4.500q5-.5 6 4l-3 5.500H4q-4-1-4-5 1-4 6-4.500z" fill="#d0d0d0"/><circle cx="14.500" cy="12" r="5.800" fill="#4cc2ff"/><path d="M14.500 11v4.500M14.500 8.300v1.500" stroke="#111" stroke-width="1.600"/></svg>
  <div class="lang"><span>ENG</span><span>IN</span></div>
  <svg class="net" width="82" height="18" viewBox="0 0 82 18" fill="none" stroke="#fff" stroke-width="1.500"><path d="M1 6.500Q10.500-2 20 6.500M4 10q6.500-6 13 0M7 13.500q3.500-3.500 7 0"/><circle cx="10.500" cy="15.500" r="1.300" fill="#fff"/><path d="M31 6.500h4l5-4.500v14l-5-4.500h-4zM43 6q2 3 0 6M46 4q3.500 5 0 10M49 1.500q5 7.500 0 15"/><rect x="61.500" y="3.500" width="17" height="11.500" rx="2.500"/><path d="M63.500 5.500h5v7.500h-5z" fill="#fff" stroke="none"/><path d="M80.500 7v4"/></svg>
  <div class="clock"><span>21:39</span><span>30-07-2025</span></div>
  <svg class="bell" width="18" height="22" viewBox="0 0 18 22"><path d="M0 17l2-3V8q1-5 7-6 6 1 6 7v5l2 3z" fill="#f3f3f3"/><path d="M5 19h7q-1 2.500-3.500 2.500T5 19z" fill="#f3f3f3"/><path d="M5 8.500h4.500l-4.500 5h5" fill="none" stroke="#2a2820" stroke-width="1.500"/><path d="M11.500 2h5l-5 5.500h5" fill="none" stroke="#2a2820" stroke-width="4"/><path d="M11.500 2h5l-5 5.500h5" fill="none" stroke="#fff" stroke-width="1.500"/></svg>
</footer>
</body>
</html>
```
FILE: styles.css
```css
* { box-sizing: border-box; }
body {
  margin: 0;
  width: 1919px;
  height: 1079px;
  overflow: hidden;
  display: flex;
  flex-direction: column;
  font: 14px/20px "Open Sans", "Noto Sans", sans-serif;
  color: #252423;
  background: #f3f2f1;
}
svg { flex: none; display: block; overflow: visible; }
.defs { position: absolute; }
span { white-space: nowrap; }

/* Title bar */
.titlebar { height: 43px; flex: none; background: #3b3a39; color: #fff; display: flex; align-items: center; padding-left: 21px; }
.ico-undo { margin-left: 18px; }
.ico-redo { margin-left: 19px; }
.doc { width: 268px; margin-left: 12px; padding-top: 5px; font-size: 14.500px; letter-spacing: 0; }
.doc small { font-size: 11px; vertical-align: 1px; }
.titlebar > .doc + svg { margin-top: 3px; }
.top-search { width: 500px; height: 30px; margin-left: 392px; background: #d4d4d2; border-radius: 3px; display: flex; align-items: center; gap: 14px; padding-left: 22px; color: #1f5c4f; font-size: 16px; }
.signin { margin-left: 356px; width: 57px; letter-spacing: .1px; }
.win { margin-left: 40px; margin-top: 3px; }

/* Ribbon tabs */
.tabs { height: 43px; flex: none; background: #fafafa; display: flex; padding: 5px 6px 0 28px; font-size: 16.300px; color: #252423; position: relative; z-index: 3; }
.tab { height: 33px; line-height: 30px; letter-spacing: 0; }
.tab.active { font-weight: 600; border-bottom: 3px solid #117865; width: 48px; letter-spacing: -.25px; line-height: 30px; }
.t-file { width: 73px; }
.t-home { margin-right: 39px; }
.t-insert { width: 83px; }
.t-model { width: 114px; letter-spacing: .15px; }
.t-view { width: 75px; }
.t-opt { width: 110px; letter-spacing: -.1px; }
.share { margin-left: auto; width: 105px; height: 30px; background: #117865; border: 0; border-radius: 4px; color: #fff; font: 14px "Open Sans", sans-serif; display: flex; align-items: center; padding: 0 0 0 9px; }
.share span { margin-left: 10px; }
.sh-chev { margin-left: 6px; }

/* Ribbon */
.ribbon { height: 114px; flex: none; background: #fafafa; display: flex; padding-top: 2px; box-shadow: 0 1px 5px rgba(0,0,0,.25); z-index: 2; }
.group { height: 110px; border-right: 1px solid #d2d0ce; display: flex; flex-direction: column; }
.g-clip { width: 201px; padding-left: 7px; }
.g-data { width: 449px; padding-left: 5px; }
.g-query { width: 145px; padding-left: 4px; }
.g-ins { width: 183px; padding-left: 11px; }
.g-calc { width: 233px; padding-left: 10px; }
.g-sens { width: 92px; }
.g-share { width: 74px; }
.g-cop { width: 73px; }
.g-sens .btns, .g-share .btns, .g-cop .btns { justify-content: center; }
.btns { display: flex; height: 93px; }
.btn { padding-top: 5px; display: flex; flex-direction: column; align-items: center; text-align: center; gap: 4px; letter-spacing: -.1px; }
.off { color: #c3c1bf; }
.w-paste { width: 58px; } .w60 { width: 60px; } .w78 { width: 78px; } .w40 { width: 40px; } .w62 { width: 62px; } .w56 { width: 56px; }
.w84 { width: 84px; } .w82 { width: 82px; } .w42 { width: 42px; } .w48 { width: 48px; } .w52 { width: 52px; } .w92 { width: 92px; } .w58 { width: 58px; } .w64 { width: 64px; }
.dn { display: inline-block; margin-left: 3px; vertical-align: 0; }
.dn.alone { margin-left: 0; }
.small { display: flex; flex-direction: column; gap: 8px; padding-top: 4px; }
.s-row { display: flex; align-items: center; gap: 5px; height: 22px; letter-spacing: 0; }
.s-row svg { width: 20px; }
.cap { text-align: center; font-size: 12px; line-height: 20px; letter-spacing: -.05px; color: #3b3a39; padding-top: 3px; }
.g-clip .cap { padding-right: 7px; }
.fx { font: italic 25px "Liberation Serif", serif; fill: #b0aeac; stroke: none; }
.cp-gap { fill: #fafafa; }
.collapse { margin: 97px 5px 0 auto; }

/* Work area */
.work { flex: 1; display: flex; min-height: 0; }
.rail { width: 51px; border-right: 1px solid #d8d6d4; background: #f3f2f1; }
.rail-item { height: 50px; display: flex; align-items: center; justify-content: center; padding: 0 0 2px 1px; }
.rail-item.on { border-left: 3px solid #117865; padding: 0 3px 0 0; }
.dax { font: 700 8px "Liberation Sans", sans-serif; fill: #6a6866; stroke: none; }
.center { width: 1417px; display: flex; flex-direction: column; }
.stage { height: 746px; background: #fff; padding-left: 25px; display: flex; overflow: hidden; }
.page { width: 1326px; display: flex; background: #fff; box-shadow: 0 0 12px rgba(0,0,0,.14); }
.left-area { width: 804px; }
.row-top, .row-bot { display: flex; }
.cards-col { width: 434px; }
.cards { display: grid; grid-template-columns: repeat(3, 130px); grid-auto-rows: 167.500px; gap: 9px; padding: 2px 0 0 19px; }
.card { border: 1px solid #cacaca; border-radius: 27px; padding: 40px 0 0 12.500px; font-family: "Liberation Sans", Arial, sans-serif; color: #000; display: flex; flex-direction: column; }
.card b { font-size: 16.300px; line-height: 22px; white-space: nowrap; }
.card span { font-size: 48.500px; line-height: 56px; margin-top: 6px; letter-spacing: -.3px; }

/* Chart text and marks */
.ttl { font: 700 18.700px "Liberation Sans", Arial, sans-serif; fill: #252423; stroke: #252423; stroke-width: .8px; letter-spacing: .5px; }
.ttl.sm { font-size: 15px; stroke-width: .55px; }
.ttl.big { font-size: 27px; stroke-width: 1.300px; letter-spacing: .7px; }
.ar { font-family: "Liberation Sans", Arial, sans-serif; fill: #111; }
.ax { font: 11px "Liberation Sans", Arial, sans-serif; fill: #000; }
.ax2 { font: 12.300px "Liberation Sans", Arial, sans-serif; fill: #000; }
.pl { font: 12.300px "Open Sans", sans-serif; fill: #6a6866; letter-spacing: -.25px; }
.din { font: 16.500px Roboto, sans-serif; fill: #333; }
.e { text-anchor: end; }
.m { text-anchor: middle; }
.grid { stroke: #000; stroke-opacity: .1; stroke-width: 1px; stroke-dasharray: 1 4; }
.line { fill: none; stroke: #5ba33b; stroke-width: 3px; stroke-linecap: round; }
.bar { fill: #5ba33b; }
.lead { fill: none; stroke: #b5b3b1; stroke-width: 1.200px; }

.filters { width: 41px; margin-left: 25px; border-left: 1px solid #a19f9d; background: #fff; position: relative; display: flex; flex-direction: column; align-items: center; padding-top: 16px; z-index: 1; }
.flip { transform: scaleX(-1); }
.fl-ico { margin: 19px 0 0 6px; }
.filters span { writing-mode: vertical-rl; font-size: 17.500px; font-weight: 600; margin: 10px 0 0 2px; letter-spacing: -.2px; }

.pagetabs { height: 44px; display: flex; align-items: flex-start; }
.view-d { width: 30px; height: 38px; margin-left: 13px; padding: 8px 0 0 2px; border-bottom: 3px solid #117865; }
.view-m { margin: 6px 0 0 31px; }
.tri { margin: 16px 0 0 25px; width: 36px; }
.ptab { width: 95px; height: 44px; margin-left: 7px; background: #fff; border-left: 1px solid #a19f9d; border-right: 1px solid #a19f9d; box-shadow: inset 0 -5px #117865; text-align: center; padding-top: 13px; letter-spacing: 0; }
.padd { width: 49px; height: 44px; background: #117865; display: flex; justify-content: center; padding-top: 14px; }

/* Panes */
.viz, .data { border-left: 1px solid #dddbd9; }
.viz { width: 226px; }
.data { width: 225px; }
.p-head { display: flex; justify-content: space-between; align-items: center; height: 48px; padding: 0 10px; }
.p-head h2 { margin: 1px 0 0; font-size: 18px; font-weight: 600; letter-spacing: -.3px; }
.data .p-head { padding-right: 9px; padding-left: 10px; }
.sub { padding-left: 10px; font-weight: 600; letter-spacing: -.2px; line-height: 20px; }
.modes { display: flex; gap: 42px; padding: 4px 0 0 10px; }
.mode { width: 40px; height: 40px; padding: 4px; }
.mode.on { background: #d2d0ce; border-radius: 2px; }
.modes .mode + .mode { margin-left: 2px; }
.notch { margin-top: 5px; }
.vgrid { display: grid; grid-template-columns: repeat(6, 23px); grid-auto-rows: 23px; gap: 12px; padding: 13px 0 0 14px; }
.vgrid svg { width: 23px; height: 23px; }
.bl { fill: #83beec; stroke: #1f6fb5; stroke-width: 1.300px; }
.gy { fill: #c8c6c4; stroke: #807e7c; stroke-width: 1.200px; }
.wh { fill: #fff; stroke: #3b3a39; stroke-width: 1.300px; }
.dk { fill: none; stroke: #3b3a39; stroke-width: 1.400px; }
.n123 { font: 10px "Open Sans", sans-serif; fill: #1f7fc4; }
.rt { font: 700 18px "Open Sans", sans-serif; fill: #1f7fc4; letter-spacing: -.2px; }
.more { padding: 19px 0 0 15px; height: 46px; }
.wells { border-top: 1px solid #d8d6d4; padding: 11px 7px 0 5px; }
.w-t { padding-left: 10px; height: 26px; }
.drop { height: 35px; background: #fff; border: 1px dashed #c1bfbd; border-radius: 2px; padding-left: 12px; line-height: 33px; letter-spacing: -.05px; }
.d2 { height: 32px; line-height: 31px; padding-left: 10px; margin-top: 13px; letter-spacing: .15px; }
.dt { margin-top: 14px; height: 20px; font-weight: 600; color: #484644; letter-spacing: -.2px; }
.tog-row { display: flex; justify-content: space-between; align-items: center; height: 20px; margin-top: 11px; padding: 0 20px 0 10px; letter-spacing: -.1px; }
.tog-row.two { margin-top: 14px; letter-spacing: 0; }
.tog { width: 40px; height: 20px; border: 1px solid #8a8886; border-radius: 10px; background: #fff; font-size: 11px; line-height: 18px; color: #605e5c; display: flex; align-items: center; padding-left: 5px; gap: 2px; }
.tog i { width: 10px; height: 10px; border-radius: 50%; background: #605e5c; }
.tog.on { background: #117865; border-color: #117865; color: #fff; gap: 4px; }
.tog.on i { background: #fff; }

.d-search { height: 30px; margin: 9px 4px 11px 5px; background: #fff; border: 1px solid #d1cfcd; border-bottom: 1px solid #605e5c; border-radius: 4px; display: flex; align-items: center; gap: 9px; padding-left: 15px; font-size: 16px; color: #605e5c; }
.d-search span { padding-top: 2px; }
.t-row, .f-row { height: 30px; display: flex; align-items: center; color: #323130; letter-spacing: -.1px; }
.t-row { padding-left: 16px; }
.tb { margin-left: 4px; }
.t-name { margin-left: 8px; }
.t-more { margin: 0 7px 0 auto; }
.f-row { padding-left: 55px; }
.f-row.exp { padding-left: 38px; }
.c-side { width: 9px; height: 15px; margin-right: 8px; }
.f-row i { width: 15px; height: 15px; border: 1px solid #8a8886; border-radius: 2px; margin-right: 10px; }
.f-row i + svg { width: 16px; height: 18px; margin-right: 6px; }

/* Status bar */
.status { height: 29px; flex: none; border-top: 1px solid #dddbd9; display: flex; align-items: center; color: #484644; padding-left: 5px; }
.pg { width: 1409px; font-size: 14.500px; padding-top: 2px; }
.pct { margin-left: 15px; width: 52px; letter-spacing: -.1px; color: #605e5c; }
.fit { margin-right: 17px; }
.upd { font-size: 14.500px; letter-spacing: -.03px; padding-top: 3px; }
.zoom { margin-top: -1px; }

/* Taskbar */
.taskbar { height: 60px; flex: none; border-top: 2px solid #0a0a0a; display: flex; align-items: center; color: #fff; padding-left: 28px;
  background: linear-gradient(90deg, #22270f 0, #262a15 80px, #262224 190px, #1b222b 290px, #112831 400px, #15302a 490px, #1e2d17 620px, #1e2c18 840px, #33221a 960px, #18302a 1060px, #12302f 1130px, #2e211a 1250px, #29231f 1500px, #252421 1700px, #31281a 1919px); }
.news { margin-top: -4px; }
.bdg { font: 12.500px "Open Sans", sans-serif; fill: #fff; }
.news-t, .lang, .clock { display: flex; flex-direction: column; line-height: 20px; }
.news-t { width: 466px; margin-left: 4px; letter-spacing: -.15px; }
.dim { color: #c8c8c8; }
.t-search { width: 273px; height: 38px; margin-left: 17px; border-radius: 19px; background: #f2f3ee; color: #5c5c5c; display: flex; align-items: center; padding-left: 14px; font-size: 16px; }
.t-search span { margin-left: 12px; width: 60px; letter-spacing: -.05px; padding-top: 1px; }
.isle { margin-left: 102px; }
.apps { display: flex; gap: 7px; margin-left: 7px; }
.app { width: 48px; height: 50px; display: flex; justify-content: center; padding-top: 9px; position: relative; }
.app svg { width: 32px; height: 32px; }
.app.sel { background: rgba(255,255,255,.08); border-radius: 5px; }
.app.sel::after, .app.dot::after { content: ""; position: absolute; bottom: 1px; left: 20px; width: 8px; height: 4px; border-radius: 2px; background: #9c9c9c; }
.app.sel::after { left: 14px; width: 20px; background: #4cc2ff; }
.app b { position: absolute; left: 25px; top: 3px; width: 20px; height: 20px; border-radius: 50%; background: #0d7f73; font-size: 11px; line-height: 20px; text-align: center; font-weight: 400; }
.up { margin-left: 156px; }
.od { margin-left: 23px; }
.lang { width: 40px; margin-left: 16px; text-align: center; letter-spacing: -.1px; }
.net { margin-left: 16px; }
.clock { width: 98px; text-align: right; font-size: 14.500px; letter-spacing: .2px; }
.bell { margin-left: 10px; }
```
